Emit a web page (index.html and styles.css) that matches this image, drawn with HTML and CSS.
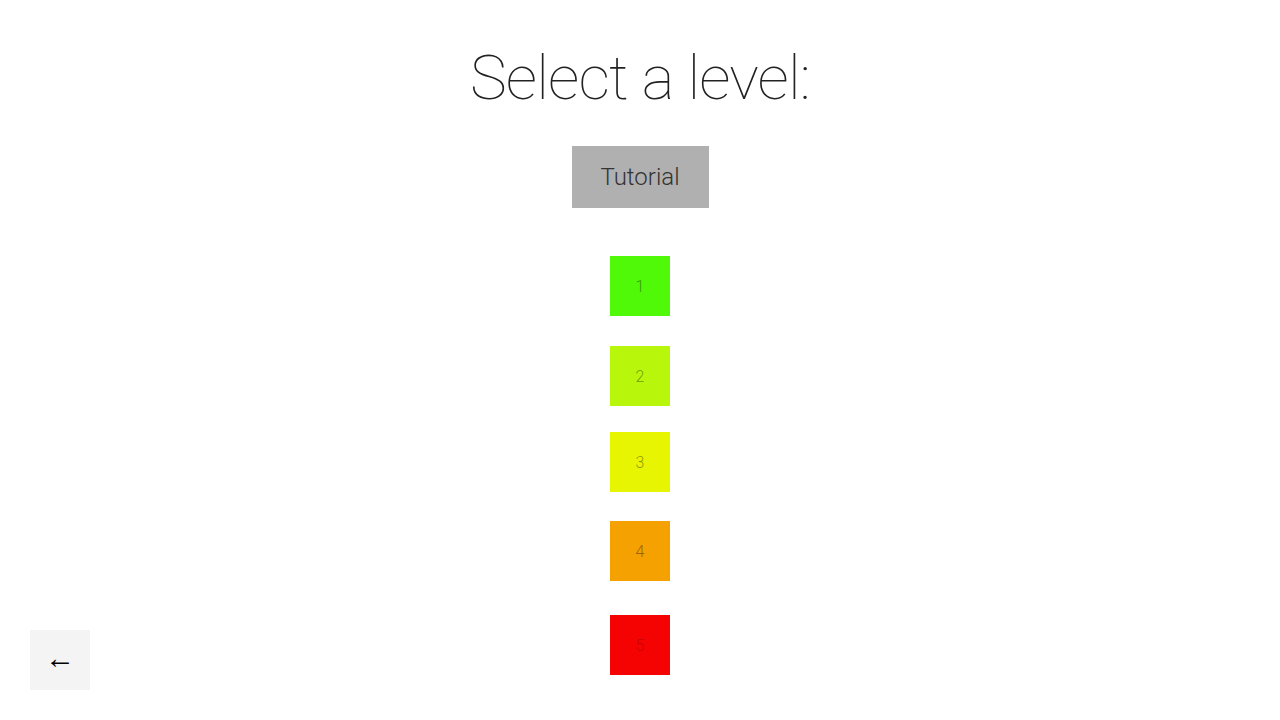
FILE: index.html
```html
<!DOCTYPE html>
<html>
<head>
<meta charset="utf-8">
<link rel="stylesheet" href="styles.css">
</head>
<body>
<main class="page">
  <h1 class="title">Select a level:</h1>
  <button class="tutorial">Tutorial</button>
  <div class="levels">
    <button class="level l1">1</button>
    <button class="level l2">2</button>
    <button class="level l3">3</button>
    <button class="level l4">4</button>
    <button class="level l5">5</button>
  </div>
</main>
<button class="back">←</button>
</body>
</html>
```

FILE: styles.css
```css
html, body {
  margin: 0;
  padding: 0;
  background: #fff;
  font-family: Roboto, "Liberation Sans", sans-serif;
}
.page {
  display: flex;
  flex-direction: column;
  align-items: center;
  padding-top: 44px;
}
.title {
  margin: 0;
  font-size: 62px;
  font-weight: 100;
  color: #222;
  line-height: 68px;
  letter-spacing: -0.9px;
}
.tutorial {
  margin-top: 34px;
  width: 137px;
  height: 62px;
  border: none;
  background: #b0b0b0;
  color: #333;
  font-family: inherit;
  font-size: 24px;
  font-weight: 300;
  padding: 0;
}
.levels {
  display: flex;
  flex-direction: column;
  align-items: center;
}
.level {
  width: 60px;
  height: 60px;
  border: none;
  padding: 0;
  font-family: inherit;
  font-size: 16px;
  font-weight: 300;
  color: rgba(0, 0, 0, 0.4);
}
.l1 { background: #4ff907; margin-top: 48px; }
.l2 { background: #b8f70c; margin-top: 30px; }
.l3 { background: #e8f502; margin-top: 26px; }
.l4 { background: #f6a102; margin-top: 29px; }
.l5 { background: #f50303; margin-top: 34px; color: rgba(0,0,0,0.2); }
.back {
  position: absolute;
  left: 30px;
  top: 630px;
  width: 60px;
  height: 60px;
  border: none;
  padding: 0 0 6px 0;
  background: #f4f4f4;
  color: #000;
  font-family: Roboto, sans-serif;
  font-weight: 300;
  font-size: 30px;
}
```
